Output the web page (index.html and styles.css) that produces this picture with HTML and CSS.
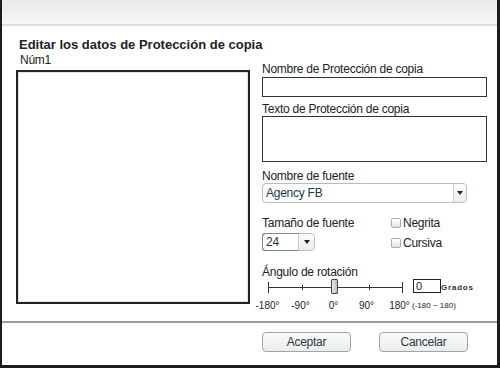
FILE: index.html
```html
<!DOCTYPE html>
<html lang="es">
<head>
    <meta charset="UTF-8">
    <meta name="viewport" content="width=device-width, initial-scale=1.0">
    <title>Editar los datos de Protección de copia</title>
    <link rel="stylesheet" href="styles.css">
</head>
<body>
    <div class="window">
        <div class="titlebar"></div>
        <div class="content">
            <h1>Editar los datos de Protección de copia</h1>
            <div class="columns">
                <div class="preview-col">
                    <div class="label">Núm1</div>
                    <div class="preview"></div>
                </div>
                <div class="form-col">
                    <div class="label">Nombre de Protección de copia</div>
                    <div class="field"></div>

                    <div class="label gap-sm">Texto de Protección de copia</div>
                    <div class="field area"></div>

                    <div class="label gap-md">Nombre de fuente</div>
                    <div class="select wide">
                        <span class="select-value">Agency FB</span>
                        <span class="select-arrow"><span class="tri"></span></span>
                    </div>

                    <div class="size-row">
                        <div class="size-field">
                            <div class="label">Tamaño de fuente</div>
                            <div class="select small">
                                <span class="select-value">24</span>
                                <span class="select-arrow"><span class="tri"></span></span>
                            </div>
                        </div>
                        <div class="styles">
                            <label class="check"><span class="box"></span>Negrita</label>
                            <label class="check"><span class="box"></span>Cursiva</label>
                        </div>
                    </div>

                    <div class="label gap-lg">Ángulo de rotación</div>
                    <div class="dial-row">
                        <div class="track">
                            <span class="tick end"></span>
                            <span class="tick"></span>
                            <span class="tick"></span>
                            <span class="tick"></span>
                            <span class="tick end"></span>
                            <span class="thumb"></span>
                        </div>
                        <div class="angle">0</div>
                        <span class="unit">Grados</span>
                    </div>
                    <div class="scale-row">
                        <span class="mark">-180°</span>
                        <span class="mark">-90°</span>
                        <span class="mark">0°</span>
                        <span class="mark">90°</span>
                        <span class="mark">180°</span>
                        <span class="range">(-180 ~ 180)</span>
                    </div>
                </div>
            </div>
        </div>
        <div class="footer">
            <button>Aceptar</button>
            <button>Cancelar</button>
        </div>
    </div>
</body>
</html>
```

FILE: styles.css
```css
* {
    box-sizing: border-box;
}
body {
    margin: 0;
    font-family: 'Liberation Sans', Arial, sans-serif;
    font-size: 12px;
    letter-spacing: -0.25px;
    color: #222;
    background: #fff;
}
.window {
    width: 500px;
    height: 368px;
    display: flex;
    flex-direction: column;
    border-left: 2px solid #1c1c1c;
    border-right: 3px solid #1c1c1c;
    border-bottom: 3px solid #1c1c1c;
    background: #fff;
}
.titlebar {
    height: 26px;
    background: linear-gradient(#e9e9e9, #f7f7f7);
    border-bottom: 2px solid #dde2df;
}
.content {
    flex: 1;
    padding: 11px 0 0 14px;
}
h1 {
    margin: 0 0 0 3px;
    font-size: 13px;
    line-height: 16px;
    font-weight: bold;
    letter-spacing: 0;
}
.columns {
    display: flex;
    gap: 12px;
}
.label {
    line-height: 14px;
    margin-bottom: 1px;
}
.preview-col .label {
    margin: 0 0 3px 4px;
}
.preview {
    width: 234px;
    height: 234px;
    border: 2px solid #222;
    box-shadow: inset 0 0 0 1px #e2e2e2;
}
.form-col {
    width: 225px;
    padding-top: 9px;
}
.gap-sm {
    margin-top: 5px;
    margin-bottom: 0;
}
.gap-md {
    margin-top: 7px;
    margin-bottom: 0;
}
.gap-lg {
    margin-top: 14px;
    margin-bottom: 0;
}
.field {
    height: 20px;
    border: 1px solid #333;
}
.field.area {
    height: 46px;
}
.select {
    display: flex;
    height: 20px;
    border: 1px solid #b8bcbc;
    border-radius: 4px;
    background: #fff;
}
.select.wide {
    width: 205px;
}
.select.small {
    width: 53px;
    height: 18px;
    margin-top: 3px;
}
.select-value {
    flex: 1;
    padding-left: 3px;
    line-height: 18px;
    color: #1b3947;
}
.select.small .select-value {
    line-height: 16px;
    border: 1px solid #7d8585;
    border-right-color: #c4c8c8;
    margin: -1px 0 -1px -1px;
    border-radius: 3px 0 0 3px;
}
.select-arrow {
    width: 13px;
    display: flex;
    align-items: center;
    justify-content: center;
    background: linear-gradient(#fbfbfb, #eceeee);
    border-left: 1px solid #d0d4d4;
    border-radius: 0 4px 4px 0;
}
.select.small .select-arrow {
    width: 15px;
    border-left: none;
}
.tri {
    width: 0;
    height: 0;
    border-left: 3px solid transparent;
    border-right: 3px solid transparent;
    border-top: 4px solid #222;
}
.size-row {
    display: flex;
    margin-top: 13px;
}
.size-field {
    width: 129px;
}
.styles {
    display: flex;
    flex-direction: column;
    gap: 6px;
}
.check {
    display: flex;
    align-items: center;
    gap: 2px;
    line-height: 14px;
}
.box {
    width: 10px;
    height: 10px;
    border: 1px solid #a9adad;
    border-radius: 2px;
    background: linear-gradient(#fff, #e4e6e6);
}
.dial-row {
    display: flex;
    align-items: flex-start;
    height: 17px;
}
.track {
    position: relative;
    display: flex;
    justify-content: space-between;
    align-items: center;
    width: 135px;
    height: 16px;
    margin: 0 0 0 6px;
    background: linear-gradient(#333, #333) center / 100% 1px no-repeat;
}
.tick {
    width: 1px;
    height: 5px;
    background: #333;
}
.tick.end {
    height: 11px;
}
.thumb {
    position: absolute;
    left: 63px;
    top: 0;
    width: 7px;
    height: 15px;
    border: 1px solid #444;
    border-radius: 1px;
    background: linear-gradient(90deg, #e8e8e8, #bdbdbd);
}
.angle {
    width: 28px;
    height: 14px;
    margin-left: 10px;
    border: 1px solid #222;
    padding-left: 2px;
    font-size: 11px;
    line-height: 12px;
}
.unit {
    margin-top: 4px;
    font-size: 8px;
    font-weight: bold;
    letter-spacing: 0.8px;
    line-height: 10px;
    color: #333;
}
.scale-row {
    display: flex;
    margin: 4px 0 0 -11px;
    font-size: 10px;
    line-height: 11px;
    letter-spacing: 0;
}
.mark {
    width: 33px;
    text-align: center;
}
.range {
    margin-left: -4px;
    font-size: 8px;
}
.footer {
    height: 44px;
    border-top: 2px solid #9c9c9c;
    display: flex;
    gap: 28px;
    padding: 9px 0 0 260px;
}
button {
    width: 89px;
    height: 20px;
    padding: 0;
    font-family: inherit;
    font-size: 12px;
    letter-spacing: -0.25px;
    color: #263a42;
    border: 1px solid #9ea5a5;
    border-radius: 4px;
    background: linear-gradient(#fafafa, #ebeded);
}
```
